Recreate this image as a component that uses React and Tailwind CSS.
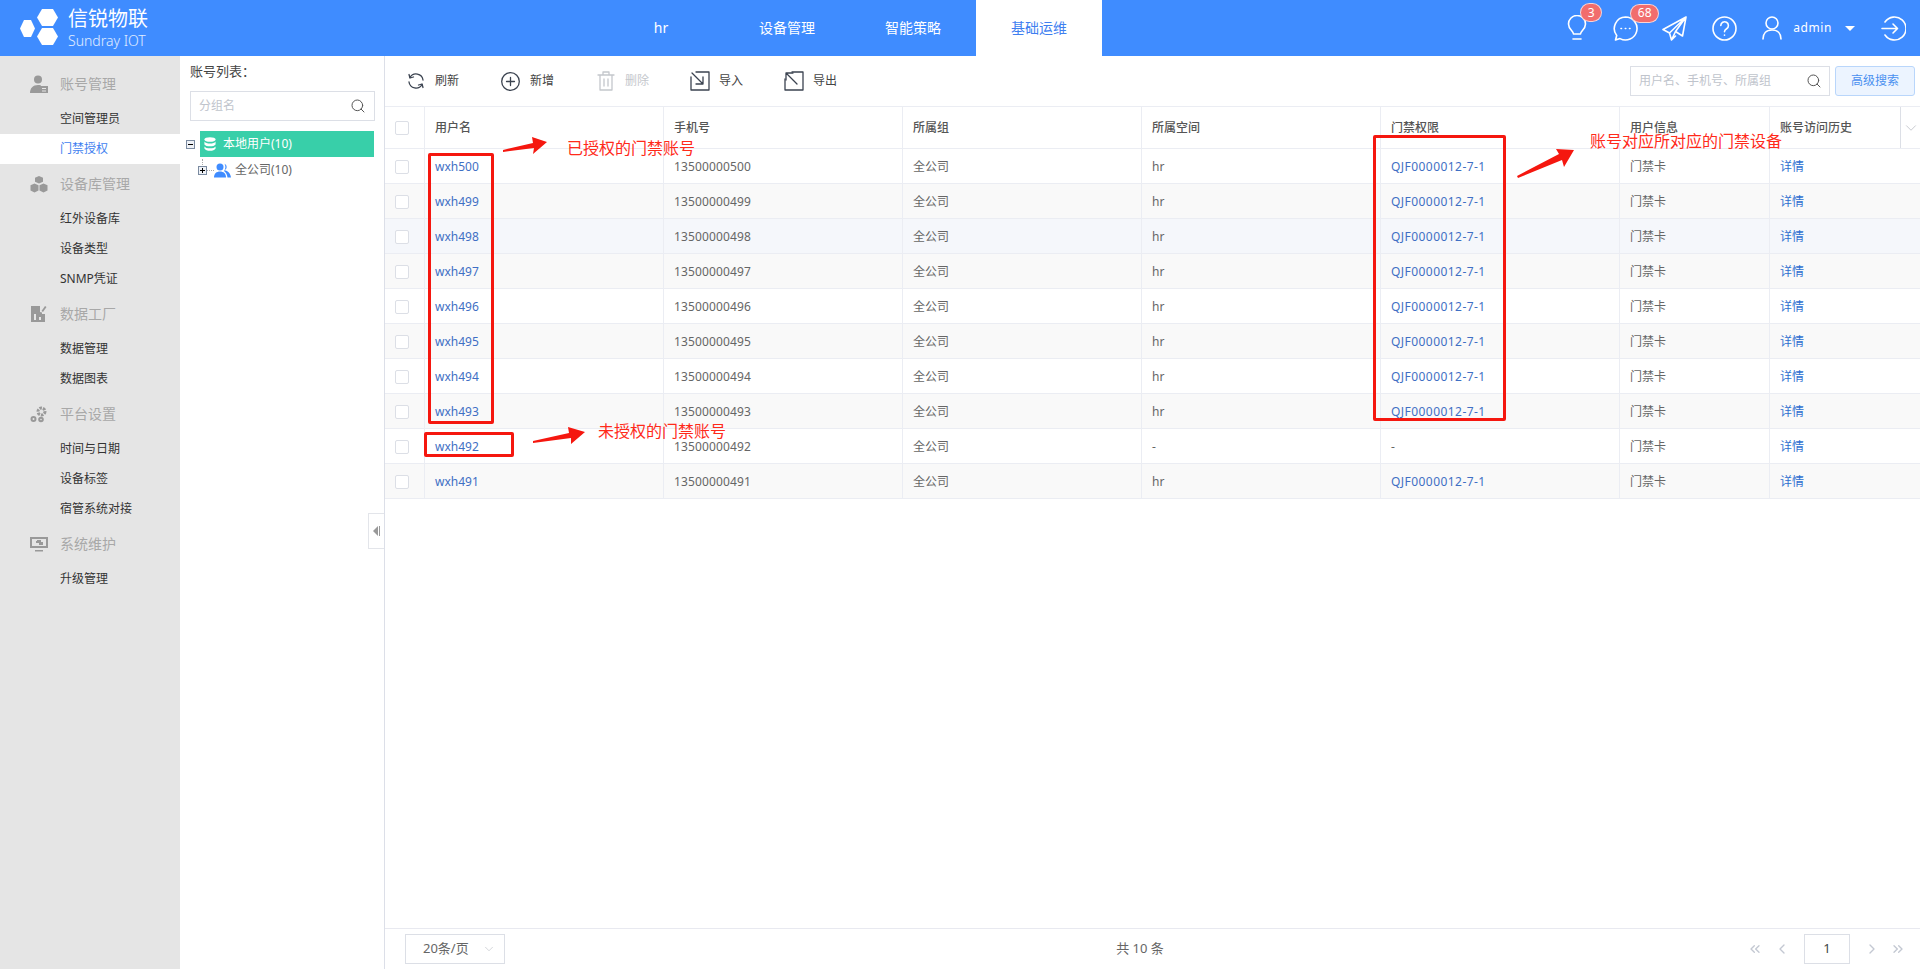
import { Search, ChevronDown, ChevronLeft, ChevronRight, ChevronsLeft, ChevronsRight } from "lucide-react";

const font = "font-['Noto_Sans','Noto_Sans_CJK_SC',sans-serif]";
const cols = "grid-cols-[39px_239px_239px_239px_239px_239px_150px_131px_20px]";

const navItems = ["hr", "设备管理", "智能策略", "基础运维"];

const menu = [
  { title: "账号管理", icon: <UserCardIcon />, items: ["空间管理员", "门禁授权"] },
  { title: "设备库管理", icon: <BoxesIcon />, items: ["红外设备库", "设备类型", "SNMP凭证"] },
  { title: "数据工厂", icon: <FactoryIcon />, items: ["数据管理", "数据图表"] },
  { title: "平台设置", icon: <GearsIcon />, items: ["时间与日期", "设备标签", "宿管系统对接"] },
  { title: "系统维护", icon: <MonitorIcon />, items: ["升级管理"] },
];

const rows = [500, 499, 498, 497, 496, 495, 494, 493, 492, 491];

export default function App() {
  return (
    <div className={`relative flex h-screen flex-col overflow-hidden bg-white text-xs text-[#666] ${font}`}>
      <Header />
      <div className="flex min-h-0 flex-1">
        <Sidebar />
        <TreePanel />
        <main className="flex min-w-0 flex-1 flex-col">
          <Toolbar />
          <Table />
          <Footer />
        </main>
      </div>
      <Annotations />
    </div>
  );
}

function Header() {
  return (
    <header className="flex h-14 shrink-0 items-stretch bg-[#3f8cff] text-white">
      <div className="flex w-[598px] items-center pl-5">
        <svg width="40" height="38" viewBox="0 0 40 38" fill="white">
          <polygon points="4,2 11,2 15,10.5 11,19 4,19 0,10.5" transform="translate(0,9)" />
          <polygon points="22,0 33,0 38,8.5 33,17 22,17 17,8.5" />
          <polygon points="22,19 33,19 38,27.5 33,36 22,36 17,27.5" />
        </svg>
        <div className="ml-2 flex flex-col">
          <span className="text-[20px] leading-[26px]">信锐物联</span>
          <span className="text-[14px] leading-[18px] font-light text-white/85">Sundray IOT</span>
        </div>
      </div>

      <nav className="flex">
        {navItems.map((n, i) => (
          <div
            key={n}
            className={`flex w-[126px] items-center justify-center text-sm ${i === 3 ? "bg-white text-[#3f7ff0]" : ""}`}
          >
            {n}
          </div>
        ))}
      </nav>

      <div className="ml-auto flex items-center pr-[14px]">
        <div className="relative mr-[26px]">
          <BulbIcon />
          <Badge className="left-[13px] w-[22px]">3</Badge>
        </div>
        <div className="relative mr-[24px]">
          <ChatIcon />
          <Badge className="left-[17px] w-[29px]">68</Badge>
        </div>
        <PlaneIcon />
        <div className="ml-[25px]">
          <HelpIcon />
        </div>
        <div className="ml-[25px]">
          <PersonIcon />
        </div>
        <span className="ml-[11px] text-[12px] tracking-[0.6px]">admin</span>
        <div className="mr-[26px] ml-[13px] h-0 w-0 border-x-[5px] border-t-[5px] border-x-transparent border-t-white" />
        <LogoutIcon />
      </div>
    </header>
  );
}

function Badge({ className, children }) {
  return (
    <span
      className={`absolute top-[-12px] flex h-[19px] items-center justify-center rounded-full border border-white/70 bg-[#f16d6d] text-[12px] text-white ${className}`}
    >
      {children}
    </span>
  );
}

function Sidebar() {
  return (
    <aside className="w-[180px] shrink-0 bg-[#e5e5e5] pt-2">
      {menu.map((g) => (
        <div key={g.title}>
          <div className="flex h-10 items-center pl-[30px] text-sm text-[#a8a8a8]">
            <div className="flex w-[30px] items-center">{g.icon}</div>
            {g.title}
          </div>
          {g.items.map((item) => (
            <div
              key={item}
              className={`flex h-[30px] items-center pl-[60px] ${
                item === "门禁授权" ? "bg-white text-[#3f7ff0]" : "text-[#333]"
              }`}
            >
              {item}
            </div>
          ))}
        </div>
      ))}
    </aside>
  );
}

function TreePanel() {
  return (
    <section className="relative w-[205px] shrink-0 border-r border-[#dcdfe8] pt-[7px] pr-[9px] pl-[10px]">
      <div className="text-[13px] leading-4 text-[#444]">账号列表：</div>
      <div className="mt-[12px] flex h-[30px] w-[185px] items-center justify-between border border-[#dcdfe6] pr-2 pl-2 text-[#c0c4cc]">
        分组名
        <Search size={16} strokeWidth={1.5} className="text-[#555]" />
      </div>
      <div className="mt-[10px] -ml-[4px] flex items-center">
        <TreeToggle minus />
        <div className="ml-[5px] flex h-[26px] w-[174px] items-center bg-[#38cfa9] pl-[4px] text-white">
          <DbIcon />
          <span className="ml-[7px]">本地用户(10)</span>
        </div>
      </div>
      <div className="relative mt-[1px] flex h-6 items-center pl-[8px]">
        <div className="absolute top-[1px] left-[12px] h-[6px] border-l border-dotted border-[#aaa]" />
        <TreeToggle />
        <div className="h-0 w-[7px] border-t border-dotted border-[#aaa]" />
        <div className="mr-[4px]">
          <GroupIcon />
        </div>
        全公司(10)
      </div>
      <div className="absolute top-[457px] right-0 flex h-9 w-[16px] items-center justify-center border border-r-0 border-[#e3e5ea] bg-white">
        <div className="h-0 w-0 border-y-[5px] border-r-[5px] border-y-transparent border-r-[#999]" />
        <div className="ml-[1px] h-[10px] w-px bg-[#999]" />
      </div>
    </section>
  );
}

function TreeToggle({ minus }) {
  return (
    <div className="relative h-[9px] w-[9px] shrink-0 border border-[#7a8aa0] bg-[#eef1f6]">
      <div className="absolute top-[3px] left-[1px] h-px w-[5px] bg-black" />
      {!minus && <div className="absolute top-[1px] left-[3px] h-[5px] w-px bg-black" />}
    </div>
  );
}

function Toolbar() {
  return (
    <div className="flex h-[50px] shrink-0 items-center pr-[5px] pl-[23px]">
      <ToolButton icon={<RefreshIcon />} label="刷新" width="w-[93px]" gap="w-[27px]" />
      <ToolButton icon={<PlusIcon />} label="新增" width="w-[96px]" gap="w-[29px]" />
      <ToolButton icon={<TrashIcon />} label="删除" width="w-[93px]" gap="w-[28px]" muted />
      <ToolButton icon={<ImportIcon />} label="导入" width="w-[94px]" gap="w-[29px]" />
      <ToolButton icon={<ExportIcon />} label="导出" width="w-[94px]" gap="w-[29px]" />
      <div className="ml-auto flex h-[30px] w-[200px] items-center justify-between border border-[#dcdfe6] pr-[7px] pl-2 text-[#c0c4cc]">
        用户名、手机号、所属组
        <Search size={16} strokeWidth={1.5} className="text-[#555]" />
      </div>
      <button className="ml-[5px] h-[30px] w-[80px] rounded-[3px] border border-[#b9d6fb] bg-[#ecf4ff] text-xs text-[#4a90f0]">
        高级搜索
      </button>
    </div>
  );
}

function ToolButton({ icon, label, width, gap, muted }) {
  return (
    <div className={`flex shrink-0 items-center ${width} ${muted ? "text-[#c4c7cc]" : "text-[#444]"}`}>
      <div className={`flex items-center ${gap}`}>{icon}</div>
      {label}
    </div>
  );
}

function Table() {
  return (
    <div className="min-h-0 flex-1">
      <div className={`grid h-[43px] border-y border-[#ebedf3] font-medium text-[#555] ${cols}`}>
        <div className="flex items-center pl-[10px]">
          <Checkbox />
        </div>
        {["用户名", "手机号", "所属组", "所属空间", "门禁权限", "用户信息", "账号访问历史"].map((h) => (
          <div key={h} className="flex items-center border-l border-[#ebedf3] pl-[10px]">
            {h}
          </div>
        ))}
        <div className="flex items-center justify-center border-l border-[#dcdfe6]">
          <ChevronDown size={18} strokeWidth={1} className="text-[#b5b9c0]" />
        </div>
      </div>
      {rows.map((n, i) => (
        <div
          key={n}
          className={`grid h-[35px] border-b border-[#ebedf3] ${cols} ${
            n === 498 ? "bg-[#f5f7fb]" : i % 2 === 1 ? "bg-[#f9f9f9]" : "bg-white"
          }`}
        >
          <div className="flex items-center pt-px pl-[10px]">
            <Checkbox />
          </div>
          <Cell className="text-[#3f6fc4]">wxh{n}</Cell>
          <Cell className="tracking-[0.13px]">13500000{n}</Cell>
          <Cell>全公司</Cell>
          <Cell>{n === 492 ? "-" : "hr"}</Cell>
          <Cell className={n === 492 ? "" : "tracking-[0.45px] text-[#3f6fc4]"}>
            {n === 492 ? "-" : "QJF0000012-7-1"}
          </Cell>
          <Cell>门禁卡</Cell>
          <Cell className="text-[#2e6fd0]">详情</Cell>
        </div>
      ))}
    </div>
  );
}

function Cell({ className = "", children }) {
  return <div className={`flex items-center border-l border-[#ebedf3] pt-px pl-[10px] ${className}`}>{children}</div>;
}

function Checkbox() {
  return <div className="h-[14px] w-[14px] rounded-[2px] border border-[#dcdfe6] bg-white" />;
}

function Footer() {
  return (
    <div className="relative flex h-[41px] shrink-0 items-center border-t border-[#e8e9f0] pr-[14px] pl-5">
      <div className="flex h-[30px] w-[100px] items-center justify-between border border-[#dcdfe6] pr-2 pl-[17px] text-[13px]">
        20条/页
        <ChevronDown size={14} strokeWidth={1} className="text-[#b5b9c0]" />
      </div>
      <div className="flex-1 pl-[28px] text-center text-[13px]">共 10 条</div>
      <div className="flex items-center text-[#c3c8d2]">
        <ChevronsLeft size={16} strokeWidth={2} />
        <ChevronLeft size={16} strokeWidth={2} className="ml-[11px]" />
        <div className="mx-[14px] flex h-[30px] w-[46px] items-center justify-center border border-[#dcdfe6] text-[13px] text-[#444]">
          1
        </div>
        <ChevronRight size={16} strokeWidth={2} />
        <ChevronsRight size={16} strokeWidth={2} className="ml-[10px]" />
      </div>
    </div>
  );
}

// red marks drawn over the screenshot
function Annotations() {
  const note = "absolute text-[16px] leading-5 whitespace-nowrap text-[#ff2a1a]";
  const box = "absolute rounded-[2px] border-[3px] border-[#f5170f]";
  return (
    <>
      <div className={`${box} top-[153px] left-[428px] h-[271px] w-[66px]`} />
      <div className={`${box} top-[432px] left-[424px] h-[25px] w-[90px]`} />
      <div className={`${box} top-[135px] left-[1373px] h-[286px] w-[133px]`} />
      <span className={`${note} top-[138px] left-[567px]`}>已授权的门禁账号</span>
      <span className={`${note} top-[421px] left-[598px]`}>未授权的门禁账号</span>
      <span className={`${note} top-[131px] left-[1590px]`}>账号对应所对应的门禁设备</span>
      <Arrow className="top-[137px] left-[503px] h-[17px] w-[45px]" w={45} h={17} points="0,13 30,6 29,0 44,5 30,17 31,11 0,15" />
      <Arrow className="top-[427px] left-[533px] h-[17px] w-[52px]" w={52} h={17} points="0,14 36,6 35,0 52,5 38,17 38,11 0,16" />
      <Arrow className="top-[143px] left-[1517px] h-[35px] w-[58px]" w={58} h={35} points="0,33 42,11 39,6 57,7 47,24 45,17 1,35" />
    </>
  );
}

function Arrow({ className, w, h, points }) {
  return (
    <svg className={`absolute ${className}`} viewBox={`0 0 ${w} ${h}`} fill="#f5170f">
      <polygon points={points} />
    </svg>
  );
}

function UserCardIcon() {
  return (
    <svg width="18" height="18" viewBox="0 0 18 18" fill="#999">
      <circle cx="8" cy="4.5" r="4" />
      <path d="M0 18c0-5 3-8 8-8 1 0 2 .1 3 .5V18z" />
      <path fillRule="evenodd" d="M10 11h8v7h-8zM12 13v1h4v-1zM12 15.5v1h4v-1z" />
    </svg>
  );
}

function BoxesIcon() {
  return (
    <svg width="18" height="18" viewBox="0 0 18 18" fill="#999">
      <path d="M9 1l4 1.8v4L9 8.6 5 6.8v-4z" />
      <path d="M4.5 8.5l4 1.8v5.2L4.5 17.5.5 15.5v-5.2z" />
      <path d="M13.5 8.5l4 1.8v5.2l-4 2-4-2v-5.2z" />
    </svg>
  );
}

function FactoryIcon() {
  return (
    <svg width="18" height="18" viewBox="0 0 18 18" fill="#999">
      <path fillRule="evenodd" d="M1 1h9v6l2 .5V9h3v8H1zM4 9v6h2V9zM9 12v3h2v-3z" />
      <path d="M11.5 6l3.500-5 1.500 1-3.500 5z" />
    </svg>
  );
}

function GearsIcon() {
  return (
    <svg width="18" height="18" viewBox="0 0 18 18" fill="none" stroke="#999">
      <circle cx="11.5" cy="6.5" r="3.500" strokeWidth="3" strokeDasharray="2.5 1" />
      <circle cx="3.5" cy="14" r="2" strokeWidth="2" />
      <circle cx="11" cy="14.5" r="1.800" strokeWidth="2" />
    </svg>
  );
}

function MonitorIcon() {
  return (
    <svg width="18" height="16" viewBox="0 0 18 16" fill="#999">
      <path fillRule="evenodd" d="M0 1h18v11H0zM2 3v7h14V3z" />
      <path d="M7 4h4v2h2v3H9V7H6V5h1zM5 14h8v1.500H5z" />
    </svg>
  );
}

function DbIcon() {
  return (
    <svg width="12" height="14" viewBox="0 0 14 14" fill="white" preserveAspectRatio="none">
      <ellipse cx="7" cy="2.5" rx="6.500" ry="2.300" />
      <path d="M.5 4.500c1 1.400 3.500 2 6.500 2s5.500-.6 6.500-2v3C12.500 8.900 10 9.300 7 9.300s-5.500-.4-6.500-1.800z" />
      <path d="M.5 9.500c1 1.300 3.500 1.800 6.500 1.800s5.500-.5 6.500-1.800v2C12.500 13.100 10 13.800 7 13.800s-5.500-.7-6.500-2.300z" />
    </svg>
  );
}

function GroupIcon() {
  return (
    <svg width="17" height="15" viewBox="0 0 17 15" fill="#3f8cff">
      <circle cx="6" cy="4" r="3.500" />
      <path d="M0 14.500c0-4 2.500-6 6-6s6 2 6 6z" />
      <path d="M10.500.8a3.500 3.500 0 0 1 0 6.500c3.500.7 6 3 6.500 7.200h-3.500c-.3-2.800-1.500-5-3.500-6.500 1.800-2 1.800-5.200.5-7.200z" />
    </svg>
  );
}

const line = { fill: "none", stroke: "white", strokeWidth: 1.6, strokeLinecap: "round", strokeLinejoin: "round" };
const dark = { fill: "none", stroke: "#3b4350", strokeWidth: 1.3, strokeLinecap: "round", strokeLinejoin: "round" };

function BulbIcon() {
  return (
    <svg width="20" height="26" viewBox="0 0 20 26" {...line} className="block">
      <path d="M6.500 19c0-3-5-4.500-5-10a8.500 8.500 0 0 1 17 0c0 5.500-5 7-5 10z" />
      <path d="M6 24h8" />
    </svg>
  );
}

function ChatIcon() {
  return (
    <svg width="25" height="25" viewBox="0 0 25 25" {...line} className="block">
      <path d="M12.500 1a11.500 11.500 0 1 1-5.500 21.600L2.500 24l1.200-4.500A11.500 11.500 0 0 1 12.500 1z" />
      <path d="M8 12.500h.5M12.300 12.500h.5M16.500 12.500h.5" />
    </svg>
  );
}

function PlaneIcon() {
  return (
    <svg width="25" height="25" viewBox="0 0 25 25" {...line} className="block">
      <path d="M24 1L1 13.500l6.500 3.500L24 1zM24 1l-3.500 19-7-4.500L24 1zM7.500 17l2 7 4-8.500M9.500 24l4-4" />
    </svg>
  );
}

function HelpIcon() {
  return (
    <svg width="25" height="25" viewBox="0 0 25 25" {...line} className="block">
      <circle cx="12.500" cy="12.500" r="11.500" />
      <path d="M8.800 9.500a3.800 3.800 0 1 1 5.800 3.300c-1.300.8-2.100 1.500-2.100 3" />
      <path d="M12.500 19v.3" />
    </svg>
  );
}

function PersonIcon() {
  return (
    <svg width="20" height="24" viewBox="0 0 20 24" {...line} className="block">
      <circle cx="10" cy="7" r="6" />
      <path d="M1 23c0-5 3-9 9-9s9 4 9 9" />
    </svg>
  );
}

function LogoutIcon() {
  return (
    <svg width="25" height="25" viewBox="0 0 25 25" {...line} className="block">
      <path d="M4 6a11.500 11.500 0 1 1 0 13" />
      <path d="M1 12.500h15M12 8l4.500 4.500L12 17" />
    </svg>
  );
}

function RefreshIcon() {
  return (
    <svg width="16" height="16" viewBox="0 0 16 16" {...dark}>
      <path d="M2 4.500A7 7 0 0 1 15 7M14 11.500A7 7 0 0 1 1 9" />
      <path d="M1 1.500l1 3.500 3.500-1M15 14.500l-1-3.500-3.500 1" />
    </svg>
  );
}

function PlusIcon() {
  return (
    <svg width="19" height="19" viewBox="0 0 19 19" {...dark}>
      <circle cx="9.500" cy="9.500" r="8.800" />
      <path d="M9.500 5.500v8M5.500 9.500h8" />
    </svg>
  );
}

function TrashIcon() {
  return (
    <svg width="18" height="20" viewBox="0 0 18 20" {...dark} stroke="#c4c7cc">
      <path d="M1 4h16M6 4V1h6v3M3 4v15h12V4M7 8v7M11 8v7" />
    </svg>
  );
}

function ImportIcon() {
  return (
    <svg width="20" height="20" viewBox="0 0 20 20" {...dark}>
      <path d="M6 1h13v18H1V6" />
      <path d="M2 2l11 11M13 6v7H6" />
    </svg>
  );
}

function ExportIcon() {
  return (
    <svg width="20" height="20" viewBox="0 0 20 20" {...dark}>
      <path d="M8 1h11v18H1V8" />
      <path d="M13 13L2 2M2 9V2h7" />
    </svg>
  );
}
